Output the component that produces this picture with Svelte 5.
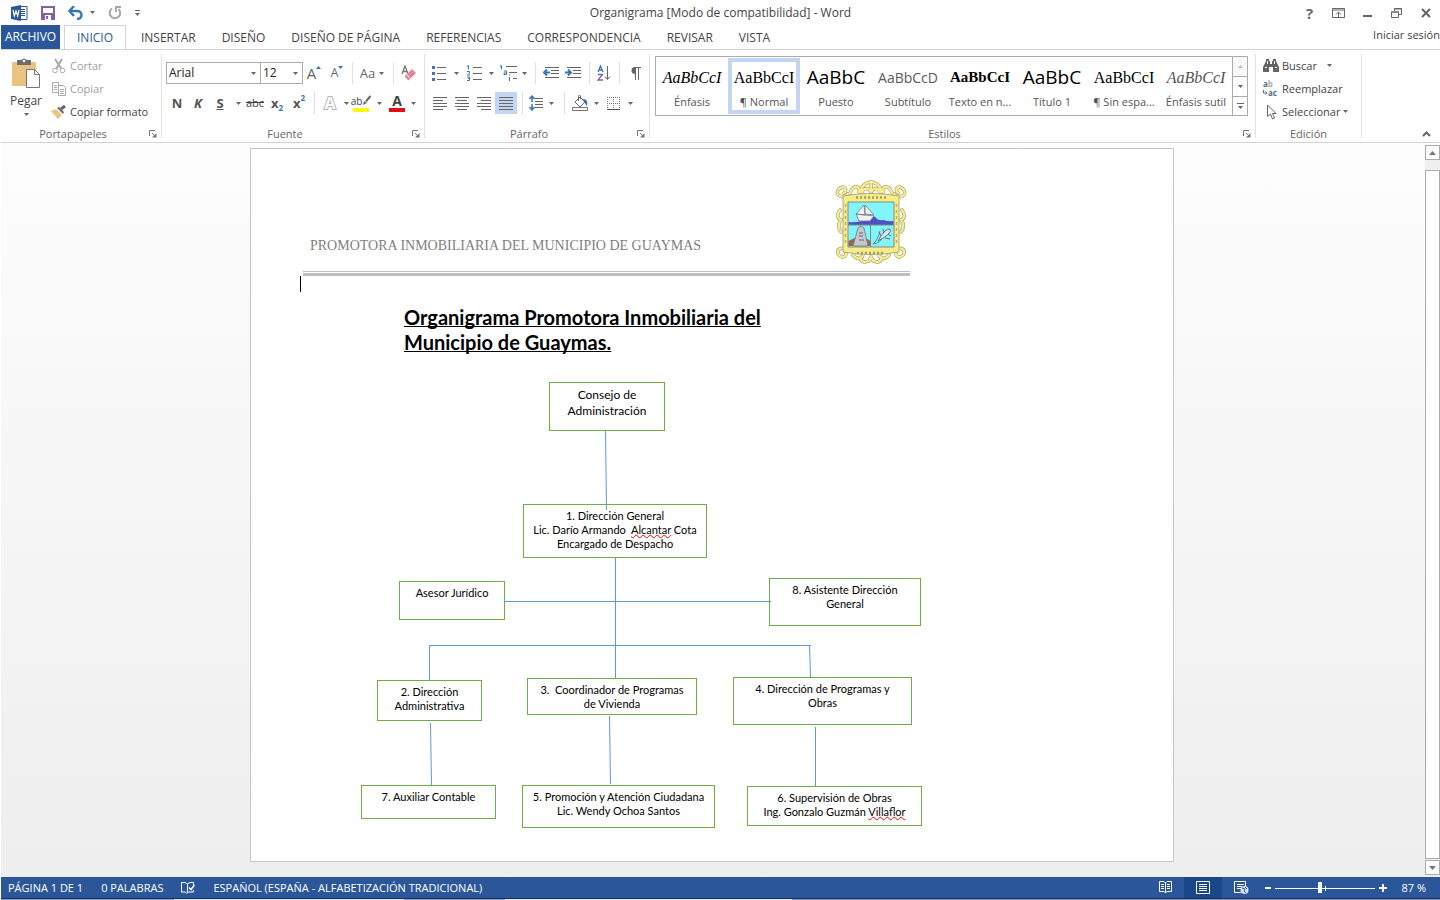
<script lang="ts">
	type Node = { x: number; y: number; w: number; h: number; lines: string[]; misspelled?: string; large?: boolean };

	const tabs = ['INICIO', 'INSERTAR', 'DISEÑO', 'DISEÑO DE PÁGINA', 'REFERENCIAS', 'CORRESPONDENCIA', 'REVISAR', 'VISTA'];
	let activeTab = $state('INICIO');

	const styles = [
		{ sample: 'AaBbCcI', name: 'Énfasis', kind: 'italic' },
		{ sample: 'AaBbCcI', name: '¶ Normal', kind: 'serif' },
		{ sample: 'AaBbC', name: 'Puesto', kind: 'big' },
		{ sample: 'AaBbCcD', name: 'Subtítulo', kind: 'light' },
		{ sample: 'AaBbCcI', name: 'Texto en n...', kind: 'bold' },
		{ sample: 'AaBbC', name: 'Título 1', kind: 'big' },
		{ sample: 'AaBbCcI', name: '¶ Sin espa...', kind: 'serif' },
		{ sample: 'AaBbCcI', name: 'Énfasis sutil', kind: 'subtle' }
	];
	let activeStyle = $state('¶ Normal');

	let zoom = $state(87);

	// positions on the drawing canvas of the page
	const nodes: Node[] = [
		{ x: 298, y: 10, w: 116, h: 49, lines: ['Consejo de', 'Administración'], large: true },
		{ x: 272, y: 132, w: 184, h: 54, lines: ['1. Dirección General', 'Lic. Darío Armando  Alcantar Cota', 'Encargado de Despacho'], misspelled: 'Alcantar' },
		{ x: 148, y: 209, w: 106, h: 39, lines: ['Asesor Jurídico'] },
		{ x: 518, y: 206, w: 152, h: 48, lines: ['8. Asistente Dirección', 'General'] },
		{ x: 126, y: 308, w: 105, h: 41, lines: ['2. Dirección', 'Administrativa'] },
		{ x: 276, y: 306, w: 170, h: 37, lines: ['3.  Coordinador de Programas', 'de Vivienda'] },
		{ x: 482, y: 305, w: 179, h: 48, lines: ['4. Dirección de Programas y', 'Obras'] },
		{ x: 110, y: 413, w: 135, h: 34, lines: ['7. Auxiliar Contable'] },
		{ x: 271, y: 413, w: 193, h: 43, lines: ['5. Promoción y Atención Ciudadana', 'Lic. Wendy Ochoa Santos'] },
		{ x: 496, y: 414, w: 175, h: 40, lines: ['6. Supervisión de Obras', 'Ing. Gonzalo Guzmán Villaflor'], misspelled: 'Villaflor' }
	];

	function split(line: string, word?: string) {
		if (!word || !line.includes(word)) return [line, '', ''];
		const at = line.indexOf(word);
		return [line.slice(0, at), word, line.slice(at + word.length)];
	}
</script>

{#snippet arrow()}
	<svg class="arrow" width="5" height="3" viewBox="0 0 5 3" aria-hidden="true"><path d="M0 0h5L2.5 3z" fill="#666" /></svg>
{/snippet}

{#snippet menu(label: string)}
	<button class="tool" aria-label={label}>{@render arrow()}</button>
{/snippet}

{#snippet launcher(label: string)}
	<button class="launcher" aria-label={label}>
		<svg width="8" height="8" viewBox="0 0 8 8"><path d="M.5 6V.5H6M3 3l3 3" fill="none" stroke="#777" /><path d="M7.5 3v4.500H3z" fill="#777" /></svg>
	</button>
{/snippet}

{#snippet lines(kind: string)}
	<svg width="14" height="13" viewBox="0 0 14 13" stroke="#666">
		<path d="M0 .5h14M0 6.500h14" />
		{#if kind === 'left'}<path d="M0 3.500h10M0 9.500h14M0 12.500h10" />{/if}
		{#if kind === 'center'}<path d="M2 3.500h10M0 9.500h14M2 12.500h10" />{/if}
		{#if kind === 'right'}<path d="M4 3.500h10M0 9.500h14M4 12.500h10" />{/if}
		{#if kind === 'full'}<path d="M0 3.500h14M0 9.500h14M0 12.500h14" />{/if}
	</svg>
{/snippet}

<div class="word">
	<header class="titlebar">
		<div class="quick">
			<svg class="logo" width="17" height="16" viewBox="0 0 17 16">
				<path d="M9 1.500h7v13H9" fill="#fff" stroke="#2b579a" />
				<path d="M10 4.500h4M10 6.500h4M10 8.500h4M10 10.500h4" stroke="#2b579a" />
				<path d="M0 2l10-2v16L0 14z" fill="#2b579a" />
				<path d="M2 5l1.300 6L5 6l1.700 5L8 5" fill="none" stroke="#fff" stroke-width="1.200" />
			</svg>
			<button aria-label="Guardar">
				<svg width="14" height="14" viewBox="0 0 14 14"><path d="M1 1h12v12H1z" fill="#fff" stroke="#8560a8" stroke-width="2" /><path d="M1 7h12v6H1z" fill="#8560a8" /><path d="M4 9h6v5H4z" fill="#fff" /><path d="M5 10h2v3H5z" fill="#8560a8" /></svg>
			</button>
			<button aria-label="Deshacer">
				<svg width="16" height="14" viewBox="0 0 16 14"><path d="M2 5h7c3 0 4.500 1.500 4.500 4S12 13 9 13" fill="none" stroke="#3a76b5" stroke-width="2.400" /><path d="M6 0L1.500 5 6 10" fill="none" stroke="#3a76b5" stroke-width="2.400" /></svg>
				{@render arrow()}
			</button>
			<button aria-label="Repetir">
				<svg width="14" height="14" viewBox="0 0 14 14"><path d="M4 2.500A5.300 5.300 0 1 0 10.500 3" fill="none" stroke="#a8a8a8" stroke-width="2" /><path d="M8 0v6M7.500 1H13" fill="none" stroke="#a8a8a8" stroke-width="2" /></svg>
			</button>
			<button aria-label="Personalizar barra">
				<svg width="5" height="6" viewBox="0 0 5 6"><path d="M0 .5h5" stroke="#666" /><path d="M0 3h5L2.500 6z" fill="#666" /></svg>
			</button>
		</div>
		<h1>Organigrama [Modo de compatibilidad] - Word</h1>
		<div class="window-buttons">
			<button class="help" aria-label="Ayuda">?</button>
			<button aria-label="Opciones de presentación">
				<svg width="13" height="10" viewBox="0 0 13 10" fill="none" stroke="#666"><path d="M.5.5h12v9H.5zM0 2h13M6.500 9V4.500M4 6.500L6.500 4 9 6.500" /></svg>
			</button>
			<button aria-label="Minimizar"><svg width="9" height="8" viewBox="0 0 9 8"><path d="M0 6h9v2H0z" fill="#666" /></svg></button>
			<button aria-label="Restaurar">
				<svg width="11" height="10" viewBox="0 0 11 10" fill="none" stroke="#666"><path d="M.5 4v5.500h7V4zM0 4h8M3.500 3V.5h7v6H8M3 1h8" /></svg>
			</button>
			<button aria-label="Cerrar"><svg width="10" height="10" viewBox="0 0 10 10"><path d="M1 1l8 8M9 1L1 9" stroke="#666" stroke-width="2" /></svg></button>
		</div>
	</header>

	<nav class="tabs">
		<button class="file">ARCHIVO</button>
		{#each tabs as tab}
			<button class="tab" class:active={tab === activeTab} onclick={() => (activeTab = tab)}>{tab}</button>
		{/each}
		<a class="signin" href="#sesion">Iniciar sesión</a>
	</nav>

	<div class="ribbon">
		<section class="group clipboard">
			<div class="split">
				<button class="paste">
					<svg width="29" height="31" viewBox="0 0 29 31">
						<path d="M0 4h24v24H0z" fill="#eac380" />
						<path d="M5 2h4.500a3 3 0 0 1 5 0H19v5H5z" fill="#6d6d6d" /><circle cx="12" cy="3" r="1.300" fill="#fff" />
						<path d="M14.500 11.500h8l5 5v13h-13z" fill="#fff" stroke="#777" /><path d="M22.500 11.500v5h5" fill="none" stroke="#777" />
					</svg>
					<span>Pegar</span>
					{@render arrow()}
				</button>
				<div class="stack">
					<button class="entry off">
						<svg width="16" height="16" viewBox="0 0 16 16" fill="none" stroke="#aaa"><path d="M4 1l6.500 10M11 1L5 11" stroke-width="2" /><circle cx="4" cy="12.500" r="2.300" /><circle cx="11.500" cy="12.500" r="2.300" /></svg>
						Cortar
					</button>
					<button class="entry off">
						<svg width="16" height="16" viewBox="0 0 16 16" fill="#fff" stroke="#aaa"><path d="M1.500 1.500h6v10h-6zM7.500 4.500h5l2 2v8h-7z" /><path d="M3 4.500h3M3 6.500h3M3 8.500h3M9 8.500h4M9 10.500h4M9 12.500h4" /></svg>
						Copiar
					</button>
					<button class="entry">
						<svg width="16" height="16" viewBox="0 0 16 16"><path d="M0 7l5-2 6 6-4 4z" fill="#eac380" /><path d="M6 4l2-1 5 5-1 2z" fill="#666" /><path d="M10 5l4-3" stroke="#666" stroke-width="3" /></svg>
						Copiar formato
					</button>
				</div>
			</div>
			<footer><span>Portapapeles</span>{@render launcher('Portapapeles')}</footer>
		</section>

		<section class="group font">
			<div class="row font-top">
				<div class="combo">
					<select aria-label="Fuente"><option>Arial</option><option>Calibri</option></select>{@render arrow()}
				</div>
				<div class="combo">
					<select aria-label="Tamaño"><option>12</option><option>14</option></select>{@render arrow()}
				</div>
				<button class="tool grow" aria-label="Aumentar">A<svg width="5" height="3" viewBox="0 0 5 3"><path d="M0 3h5L2.500 0z" fill="#3a76b5" /></svg></button>
				<button class="tool shrink" aria-label="Reducir">A<svg width="5" height="3" viewBox="0 0 5 3"><path d="M0 0h5L2.500 3z" fill="#3a76b5" /></svg></button>
				<i class="sep"></i>
				<button class="tool case">Aa{@render arrow()}</button>
				<i class="sep"></i>
				<button class="tool" aria-label="Borrar formato">
					<svg width="16" height="16" viewBox="0 0 16 16"><path d="M1 9L4 1l3 8M2.500 6.500h4" fill="none" stroke="#777" stroke-width="1.300" /><path d="M3.500 11.500L11 4l4 4-7.500 7.500z" fill="#e48699" /><path d="M5.500 9.500l4 4" stroke="#fff" /></svg>
				</button>
			</div>
			<div class="row font-bottom">
				<button class="tool letter">N</button>
				<button class="tool letter slant">K</button>
				<button class="tool letter under">S</button>
				{@render menu('Subrayado')}
				<button class="tool strike">abc</button>
				<button class="tool letter">x<small>2</small></button>
				<button class="tool letter raised">x<small>2</small></button>
				<i class="sep"></i>
				<button class="tool outline">A</button>
				{@render menu('Efectos de texto')}
				<button class="tool swatch yellow"><span>ab</span><svg width="9" height="11" viewBox="0 0 9 11"><path d="M8.500 1L4 6.500" stroke="#666" stroke-width="2" /><path d="M1 10l1-4 3 2z" fill="#666" /></svg></button>
				{@render menu('Color de resaltado')}
				<button class="tool swatch red"><b>A</b></button>
				{@render menu('Color de fuente')}
			</div>
			<footer><span>Fuente</span>{@render launcher('Fuente')}</footer>
		</section>

		<section class="group paragraph">
			<div class="row para-top">
				<button class="tool" aria-label="Viñetas">
					<svg width="14" height="15" viewBox="0 0 14 15"><path d="M5 1.500h9M5 7.500h9M5 13.500h9" stroke="#666" /><path d="M0 0h3v3H0zM0 6h3v3H0zM0 12h3v3H0z" fill="#3a76b5" /></svg>
				</button>
				{@render menu('Viñetas')}
				<button class="tool" aria-label="Numeración">
					<svg width="15" height="16" viewBox="0 0 15 16"><path d="M6 2.500h9M6 8.500h9M6 14.500h9" stroke="#666" /><path d="M0 1.500L1.500.5v4M0 6.500h2.500v1.500L.5 10H3M0 12h2.500v3.500H0M1 13.500h1.500" fill="none" stroke="#3a76b5" /></svg>
				</button>
				{@render menu('Numeración')}
				<button class="tool" aria-label="Lista multinivel">
					<svg width="17" height="16" viewBox="0 0 17 16"><path d="M6 1.500h11M9 7.500h8M13 13.500h4" stroke="#666" /><path d="M0 1.500L1.500.5v4M4 6h2.500v3.500H4V8h2M9.500 9.500v1M9.500 12v4" fill="none" stroke="#3a76b5" /></svg>
				</button>
				{@render menu('Lista multinivel')}
				<i class="sep"></i>
				<button class="tool" aria-label="Disminuir sangría">
					<svg width="16" height="12" viewBox="0 0 16 12"><path d="M2 .5h14M8 3.500h8M8 6.500h8M2 10.500h14" stroke="#666" /><path d="M1 5.500h6M4 2.500l-3 3 3 3" fill="none" stroke="#3a76b5" stroke-width="2" /></svg>
				</button>
				<button class="tool" aria-label="Aumentar sangría">
					<svg width="16" height="12" viewBox="0 0 16 12"><path d="M2 .5h14M8 3.500h8M8 6.500h8M2 10.500h14" stroke="#666" /><path d="M0 5.500h6M3 2.500l3 3-3 3" fill="none" stroke="#3a76b5" stroke-width="2" /></svg>
				</button>
				<i class="sep"></i>
				<button class="tool" aria-label="Ordenar">
					<svg width="14" height="16" viewBox="0 0 14 16" fill="none"><path d="M1 7l2.500-6L6 7M2 5h3" stroke="#3a76b5" stroke-width="1.300" /><path d="M1 9.500h4.500L1 15h5" stroke="#8560a8" stroke-width="1.300" /><path d="M10.500 1v13M8 11.500l2.500 3 2.500-3" stroke="#666" /></svg>
				</button>
				<i class="sep"></i>
				<button class="tool" aria-label="Mostrar todo">
					<svg width="11" height="13" viewBox="0 0 11 13"><path d="M5 7a3.400 3.400 0 0 1 0-7z" fill="#666" /><path d="M4 .5h7M5.500 0v13M8.500 0v13" stroke="#666" /></svg>
				</button>
			</div>
			<div class="row para-bottom">
				<button class="tool" aria-label="Izquierda">{@render lines('left')}</button>
				<button class="tool" aria-label="Centrar">{@render lines('center')}</button>
				<button class="tool" aria-label="Derecha">{@render lines('right')}</button>
				<button class="tool pressed" aria-label="Justificar">{@render lines('full')}</button>
				<i class="sep"></i>
				<button class="tool" aria-label="Interlineado">
					<svg width="14" height="16" viewBox="0 0 14 16" fill="none"><path d="M6 3.500h8M6 6.500h8M6 9.500h8M6 12.500h8" stroke="#666" /><path d="M3 1v6M.5 4L3 1l2.500 3M3 9v6M.5 12L3 15l2.500-3" stroke="#3a76b5" stroke-width="1.500" /></svg>
				</button>
				{@render menu('Interlineado')}
				<i class="sep"></i>
				<button class="tool" aria-label="Sombreado">
					<svg width="17" height="16" viewBox="0 0 17 16"><path d="M3 7l5-5 5 5-5 5z" fill="#fff" stroke="#666" /><path d="M6.500 6V1.500A1 1 0 0 1 8.500 1v3" fill="none" stroke="#666" /><path d="M11 4c4 0 5 3 4 7-2-1-1-3-3-4z" fill="#3a76b5" /><path d="M.5 12.500h15v3H.5z" fill="#fff" stroke="#777" /></svg>
				</button>
				{@render menu('Sombreado')}
				<button class="tool" aria-label="Bordes">
					<svg width="13" height="13" viewBox="0 0 13 13"><path d="M0 .5h13M0 6.500h13M.5 0v13M6.500 0v13M12.500 0v13" stroke="#777" stroke-dasharray="1 1" /><path d="M0 12.500h13" stroke="#555" /></svg>
				</button>
				{@render menu('Bordes')}
			</div>
			<footer><span>Párrafo</span>{@render launcher('Párrafo')}</footer>
		</section>

		<section class="group styles">
			<div class="gallery">
				{#each styles as style}
					<button class="style" class:chosen={style.name === activeStyle} onclick={() => (activeStyle = style.name)}>
						<span class="sample {style.kind}">{style.sample}</span>
						<span class="name">{style.name}</span>
					</button>
				{/each}
				<div class="gallery-nav">
					<button class="dim" aria-label="Anterior"><svg width="5" height="3" viewBox="0 0 5 3"><path d="M0 3h5L2.500 0z" fill="#bbb" /></svg></button>
					<button aria-label="Siguiente">{@render arrow()}</button>
					<button aria-label="Más"><svg width="7" height="6" viewBox="0 0 7 6"><path d="M0 .5h7" stroke="#666" /><path d="M1 3h5L3.500 6z" fill="#666" /></svg></button>
				</div>
			</div>
			<footer><span>Estilos</span>{@render launcher('Estilos')}</footer>
		</section>

		<section class="group editing">
			<div class="stack">
				<button class="entry">
					<svg width="16" height="14" viewBox="0 0 16 14" fill="#666"><path d="M3 0h3v2h1v3h2V2h1V0h3v2l3 6v5h-6V8H6v5H0V8l3-6z" /><path d="M2 8.500h2M12 8.500h2M4.500 2v3M11.500 2v3" stroke="#fff" /></svg>
					Buscar <em class="wide">{@render arrow()}</em>
				</button>
				<button class="entry">
					<svg class="replace" width="16" height="18" viewBox="0 0 16 18"><text x="0" y="7">a<tspan fill="#aaa">b</tspan></text><text x="5" y="16">a<tspan fill="#3a76b5">c</tspan></text><path d="M.5 10v3H4M2.500 11.500L4 13l-1.500 1.500" fill="none" stroke="#3a76b5" /></svg>
					Reemplazar
				</button>
				<button class="entry">
					<svg width="16" height="16" viewBox="0 0 16 16"><path d="M4.500 1v11.500l3-2.500 2 5 2-1-2-4.500h3.500z" fill="#fff" stroke="#666" /></svg>
					Seleccionar <em>{@render arrow()}</em>
				</button>
			</div>
			<footer><span>Edición</span></footer>
		</section>
		<div class="tail">
			<button aria-label="Contraer la cinta"><svg width="9" height="6" viewBox="0 0 9 6"><path d="M1 5l3.500-3.500L8 5" fill="none" stroke="#666" stroke-width="2" /></svg></button>
		</div>
	</div>

	<main class="workspace">
		<div class="desk">
			<article class="page">
				<div class="letterhead">
					<p>PROMOTORA INMOBILIARIA DEL MUNICIPIO DE GUAYMAS</p>
					<svg width="72" height="85" viewBox="0 0 72 85">
						<g fill="none" stroke="#aaa67e" stroke-width="3.600" stroke-linecap="round">
							<path d="M13 14C6 20-1 14 4 9s9 1 5 4M59 14c7 6 14 0 9-5s-9 1-5 4M13 70c-7-4-13 0-9 5s9 0 6-4M59 70c7-4 13 0 9 5s-9 0-6-4" />
							<path d="M15 13c4-10 11-6 9-1M57 13c-4-10-11-6-9-1M26 12c0-8 8-10 10-10s10 2 10 10M36 3v9M27 12c3-6 7-3 9 0 2-3 6-6 9 0M26 77c-2 6 8 7 10 0 2 7 12 6 10 0M18 75c5 6 10 3 10-1M54 75c-5 6-10 3-10-1M5 30c-4 5-2 9 1 10-3 3-3 8 0 12M67 30c4 5 2 9-1 10 3 3 3 8 0 12" />
						</g>
						<g fill="none" stroke="#f8ef8c" stroke-width="2.200" stroke-linecap="round">
							<path d="M13 14C6 20-1 14 4 9s9 1 5 4M59 14c7 6 14 0 9-5s-9 1-5 4M13 70c-7-4-13 0-9 5s9 0 6-4M59 70c7-4 13 0 9 5s-9 0-6-4" />
							<path d="M15 13c4-10 11-6 9-1M57 13c-4-10-11-6-9-1M26 12c0-8 8-10 10-10s10 2 10 10M36 3v9M27 12c3-6 7-3 9 0 2-3 6-6 9 0M26 77c-2 6 8 7 10 0 2 7 12 6 10 0M18 75c5 6 10 3 10-1M54 75c-5 6-10 3-10-1M5 30c-4 5-2 9 1 10-3 3-3 8 0 12M67 30c4 5 2 9-1 10 3 3 3 8 0 12" />
						</g>
						<path d="M8 16q28-5 56 0v56q-28 5-56 0z" fill="#f7ed88" stroke="#b0ab78" />
						<path d="M21 17.500h31M22 73h28" stroke="#a39d68" stroke-width="2.500" stroke-dasharray="2 2" />
						<path d="M10.500 24v42M61.500 24v42" stroke="#b8b272" stroke-width="1.500" stroke-dasharray="3 3" />
						<path d="M13 22h46v45H13z" fill="#82f4fb" stroke="#8b8b78" />
						<path d="M13.500 42q6 1 13-1 8-6 14-4 2 4 8 3 5 2 10 1v4h-45z" fill="#514fc4" />
						<path d="M21 34l18 2-4 5H24zM29 25l-8 9 9 1zM30 25l9 10-9-1z" fill="#f0f1f4" stroke="#778" stroke-width=".8" />
						<path d="M13 45h46M35.500 45v22" stroke="#7b8b86" />
						<path d="M13.500 66V61l6-3h11l5 3v5z" fill="#95694d" />
						<path d="M18 66l5-18 3-2 3 2 4 18z" fill="#c5c7cf" stroke="#777" stroke-width=".8" />
						<path d="M24 53h4M24 56h4M24 60h5" stroke="#667" />
						<path d="M38 64q5-4 7-13M38 64q7 0 11-9" fill="none" stroke="#5b8a9e" />
						<path d="M43 61q7-13 12-12 3 4-12 12zM46 56l-2-4M49 53l-1-4M50 58l5 1M53 54l3 2" fill="#dde8ed" stroke="#667" stroke-width=".9" />
					</svg>
				</div>
				<div class="rule"></div>
				<div class="caret"></div>
				<h2>Organigrama Promotora Inmobiliaria del<br />Municipio de Guaymas.</h2>
				<div class="chart">
					{#each nodes as node}
						<div class="node" class:large={node.large} style="left:{node.x}px;top:{node.y}px;width:{node.w}px;height:{node.h}px">
							{#each node.lines as line}
								{@const [before, word, after] = split(line, node.misspelled)}
								<p>{before}{#if word}<span class="typo">{word}</span>{/if}{after}</p>
							{/each}
						</div>
					{/each}
					<svg class="links" width="922" height="489" viewBox="0 0 922 489">
						<path d="M354.500 59l1 79M364.500 186v120M254 229.500h266M178.500 308V273.500H560M558.500 273l1 32M179.500 351l1 62M358.500 344l1 68M564.500 355v59" />
					</svg>
				</div>
			</article>
		</div>
		<div class="scrollbar">
			<button aria-label="Subir"><svg width="7" height="4" viewBox="0 0 7 4"><path d="M0 4h7L3.500 0z" fill="#777" /></svg></button>
			<div class="track"><div class="thumb"></div></div>
			<button aria-label="Bajar"><svg width="7" height="4" viewBox="0 0 7 4"><path d="M0 0h7L3.500 4z" fill="#777" /></svg></button>
		</div>
	</main>

	<footer class="status">
		<span>PÁGINA 1 DE 1</span>
		<span>0 PALABRAS</span>
		<button aria-label="Revisión">
			<svg width="14" height="13" viewBox="0 0 14 13" fill="none" stroke="#fff"><path d="M5.500 12.500L4.500 11H.5V1.500H4L6.500 3v8M6.500 3L9 1.500h3.500V4M6 12l2-1h4.500V9" /><path d="M8 6.500l2 2 3.500-4.500" stroke-width="1.500" /></svg>
		</button>
		<span>ESPAÑOL (ESPAÑA - ALFABETIZACIÓN TRADICIONAL)</span>
		<div class="views">
			<button aria-label="Modo de lectura">
				<svg width="13" height="13" viewBox="0 0 13 13" fill="none" stroke="#fff"><path d="M6.500 2L5 .5H.5v10H5L6.500 12 8 10.500h4.500V.5H8zM6.500 2v10M2 3.500h3M2 5.500h3M2 7.500h3M8 3.500h3M8 5.500h3M8 7.500h3" /></svg>
			</button>
			<button class="current" aria-label="Diseño de impresión">
				<svg width="14" height="13" viewBox="0 0 14 13" fill="none" stroke="#fff"><path d="M.5.5h13v12H.5zM3 3.500h8M3 5.500h8M3 7.500h8M3 9.500h8" /></svg>
			</button>
			<button aria-label="Diseño web">
				<svg width="15" height="13" viewBox="0 0 15 13"><path d="M7 11.500H.5V.5h11V5M3 3.500h7M3 5.500h5M3 7.500h4" fill="none" stroke="#fff" /><circle cx="10.500" cy="9" r="4" fill="#d5e0f0" /><path d="M8 7l3 1-1 2 2 2M11 6l2 2" stroke="#2b579a" fill="none" /></svg>
			</button>
		</div>
		<div class="zoom">
			<button aria-label="Alejar"><svg width="6" height="2" viewBox="0 0 6 2"><path d="M0 0h6v2H0z" fill="#fff" /></svg></button>
			<input type="range" min="10" max="184" bind:value={zoom} aria-label="Zoom" />
			<button aria-label="Acercar"><svg width="8" height="8" viewBox="0 0 8 8"><path d="M0 3h8v2H0zM3 0h2v8H3z" fill="#fff" /></svg></button>
			<output>{zoom} %</output>
		</div>
	</footer>
	<div class="taskbar"></div>
</div>

<style>
	:global(body) {
		margin: 0;
		background: #fff;
	}
	.word {
		display: flex;
		flex-direction: column;
		height: 100vh;
		padding-left: 1px;
		box-sizing: border-box;
		overflow: hidden;
		font: 12px/16px 'Open Sans', 'Noto Sans', sans-serif;
		color: #444;
	}
	button {
		display: flex;
		align-items: center;
		justify-content: center;
		padding: 0;
		border: 0;
		background: none;
		font: inherit;
		color: inherit;
		white-space: nowrap;
	}
	svg {
		display: block;
		flex: none;
	}
	p, h1, h2 {
		margin: 0;
	}

	.titlebar {
		display: grid;
		grid-template-columns: 1fr auto 1fr;
		align-items: center;
		height: 25px;
		flex: none;
	}
	.titlebar h1 {
		font-size: 12px;
		font-weight: 400;
	}
	.quick {
		display: flex;
		align-items: center;
		gap: 13px;
		padding-left: 10px;
		height: 22px;
	}
	.quick button {
		gap: 6px;
	}
	.window-buttons {
		display: flex;
		justify-content: flex-end;
		height: 22px;
	}
	.window-buttons button {
		width: 29px;
	}
	.window-buttons .help {
		font-size: 15px;
		font-weight: 700;
		color: #666;
	}

	.tabs {
		display: flex;
		height: 25px;
		flex: none;
		border-bottom: 1px solid #d4d4d4;
		box-sizing: border-box;
		overflow: hidden;
	}
	.file {
		width: 59px;
		margin-right: 4px;
		background: #2b579a;
		color: #fff;
	}
	.tab {
		padding: 2px 13px 0;
	}
	.tab.active {
		margin-right: 2px;
		padding: 1px 12px 0;
		border: 1px solid #d4d4d4;
		border-bottom: 0;
		color: #2b579a;
	}
	.signin {
		margin-left: auto;
		font-size: 11px;
		line-height: 20px;
		color: inherit;
		text-decoration: none;
		white-space: nowrap;
	}

	.ribbon {
		display: flex;
		height: 92px;
		flex: none;
		border-bottom: 1px solid #d4d4d4;
	}
	.group {
		display: flex;
		flex-direction: column;
		margin: 4px 0;
		padding-top: 8px;
		border-right: 1px solid #e1e1e1;
		box-sizing: border-box;
	}
	.group footer {
		display: flex;
		align-items: center;
		height: 8px;
		margin-top: auto;
		font-size: 11px;
		color: #666;
	}
	.group footer span {
		flex: 1;
		text-align: center;
	}
	.launcher {
		width: 16px;
	}
	.clipboard {
		width: 161px;
		padding-top: 0;
	}
	.font {
		width: 263px;
	}
	.paragraph {
		width: 225px;
	}
	.styles {
		flex: 1;
		padding-top: 2px;
	}
	.editing {
		width: 106px;
		padding-top: 0;
	}
	.tail {
		display: flex;
		align-items: flex-end;
		justify-content: flex-end;
		width: 78px;
		padding: 0 9px 5px 0;
		box-sizing: border-box;
	}

	.split {
		display: flex;
	}
	.paste {
		flex-direction: column;
		justify-content: flex-start;
		width: 50px;
		padding-top: 4px;
		gap: 4px;
	}
	.stack {
		display: flex;
		flex-direction: column;
	}
	.editing .stack {
		padding-left: 7px;
	}
	.entry {
		justify-content: flex-start;
		gap: 3px;
		height: 23px;
		font-size: 11px;
	}
	.entry.off {
		color: #a0a0a0;
	}
	.entry em.wide {
		margin-left: 7px;
	}
	.replace {
		font: 700 8px 'Open Sans', sans-serif;
		fill: #666;
		overflow: visible;
	}

	.row {
		display: grid;
		height: 22px;
		margin-bottom: 8px;
	}
	.font-top {
		grid-template-columns: 94px 42px 24px 22px 8px 32px 10px 22px;
		padding-left: 4px;
	}
	.font-bottom {
		grid-template-columns: 22px 20px 24px 12px 22px 22px 22px 8px 24px 8px 22px 14px 22px 10px;
		padding-left: 4px;
	}
	.para-top {
		grid-template-columns: 20px 14px 22px 12px 22px 10px 12px 20px 24px 8px 22px 8px 24px;
		padding-left: 4px;
	}
	.para-bottom {
		grid-template-columns: 22px 22px 22px 22px 10px 18px 12px 14px 18px 14px 20px 14px;
		padding-left: 4px;
	}
	.sep {
		justify-self: center;
		width: 1px;
		background: #e1e1e1;
	}
	.combo {
		display: grid;
		align-items: center;
		margin-right: -1px;
		border: 1px solid #ababab;
	}
	.combo select {
		grid-area: 1 / 1;
		width: 100%;
		height: 20px;
		padding: 0 2px;
		border: 0;
		appearance: none;
		background: #fff;
		font: inherit;
		color: #222;
	}
	.combo .arrow {
		grid-area: 1 / 1;
		justify-self: end;
		margin-right: 4px;
		pointer-events: none;
	}
	.tool.pressed {
		background: #c2d5f2;
	}
	.grow, .shrink {
		align-items: flex-start;
		line-height: 22px;
		color: #666;
	}
	.grow {
		font-size: 15px;
	}
	.shrink {
		font-size: 12px;
	}
	.grow svg, .shrink svg {
		margin-top: 4px;
	}
	.case {
		gap: 4px;
		font-size: 13px;
		color: #666;
	}
	.letter {
		font-size: 13px;
		font-weight: 700;
		color: #555;
	}
	.letter small {
		align-self: flex-end;
		font-size: 8px;
		line-height: 12px;
		color: #3a76b5;
	}
	.letter.raised small {
		align-self: flex-start;
	}
	.slant {
		font-style: italic;
	}
	.under {
		text-decoration: underline;
	}
	.strike {
		font-size: 11px;
		text-decoration: line-through;
	}
	.outline {
		font-size: 16px;
		font-weight: 700;
		color: #fff;
		-webkit-text-stroke: 2px #b5b5b5;
		paint-order: stroke fill;
	}
	.swatch {
		align-items: flex-start;
		align-self: center;
		justify-self: center;
		width: 16px;
		height: 17px;
		font-size: 10px;
		line-height: 12px;
		border-bottom: 4px solid #fcf712;
		box-sizing: border-box;
	}
	.swatch.red {
		font-size: 14px;
		border-color: #e01010;
	}

	.gallery {
		display: flex;
		height: 60px;
		margin: 0 7px 0 5px;
		border: 1px solid #ababab;
		box-sizing: border-box;
	}
	.style {
		flex: 1;
		flex-direction: column;
		min-width: 0;
		margin: 1px 0;
		border: 4px solid transparent;
	}
	.style.chosen {
		border-color: #c2d5f2;
	}
	.sample {
		font: 16px/31px 'Liberation Serif', serif;
		color: #000;
	}
	.sample.italic {
		font-style: italic;
	}
	.sample.big {
		font: 19px/31px 'Open Sans', sans-serif;
	}
	.sample.light {
		font: 14px/31px 'Open Sans', sans-serif;
		color: #5a5a5a;
	}
	.sample.bold {
		font-size: 15px;
		font-weight: 700;
	}
	.sample.subtle {
		font-style: italic;
		color: #555;
	}
	.name {
		font-size: 11px;
		line-height: 17px;
		color: #555;
	}
	.gallery-nav {
		display: grid;
		grid-template-rows: 1fr 1fr 1fr;
		width: 14px;
		border-left: 1px solid #ababab;
	}
	.gallery-nav button + button {
		border-top: 1px solid #ababab;
	}
	.gallery-nav .dim {
		background: #f8f8f8;
	}

	.workspace {
		display: flex;
		flex: 1;
		min-height: 0;
		background: linear-gradient(#fdfdfd, #eee);
	}
	.desk {
		flex: 1;
		padding: 5px 2px 0 0;
		overflow: hidden;
	}
	.page {
		width: 922px;
		margin: 0 auto;
		border: 1px solid #c6c6c6;
		background: #fff;
	}
	.letterhead {
		display: flex;
		align-items: flex-end;
		justify-content: space-between;
		width: 597px;
		height: 116px;
		padding: 0 3px 6px 59px;
	}
	.letterhead p {
		padding-bottom: 10px;
		font: 14px/18px 'Liberation Serif', serif;
		color: #808080;
		white-space: nowrap;
	}
	.rule {
		width: 607px;
		height: 1px;
		margin-left: 52px;
		border-top: 1px solid #bfbfbf;
		border-bottom: 3px solid #bfbfbf;
	}
	.caret {
		width: 1px;
		height: 16px;
		margin-left: 49px;
		background: #000;
	}
	h2 {
		margin: 13px 0 17px 153px;
		font: 700 20px/25px Lato, sans-serif;
		color: #000;
		text-decoration: underline;
		text-decoration-skip-ink: none;
		text-decoration-thickness: 1px;
	}
	.chart {
		position: relative;
		height: 489px;
	}
	.links {
		position: absolute;
		inset: 0;
		fill: none;
		stroke: #5b9bd5;
	}
	.node {
		position: absolute;
		padding-top: 4px;
		border: 1px solid #70ad47;
		box-sizing: border-box;
		background: #fff;
		font: 11px/14px Lato, sans-serif;
		color: #000;
		text-align: center;
		white-space: pre;
	}
	.node.large {
		font-size: 12px;
		line-height: 16px;
	}
	.typo {
		text-decoration: underline wavy #f00 1px;
		text-decoration-skip-ink: none;
		text-underline-offset: 0;
	}

	.scrollbar {
		display: flex;
		flex-direction: column;
		width: 15px;
		padding: 2px 0;
	}
	.scrollbar button {
		height: 15px;
		border: 1px solid #ababab;
		background: #fff;
	}
	.track {
		display: flex;
		flex: 1;
		padding: 10px 0 1px;
		background: #f0f0f0;
	}
	.thumb {
		flex: 1;
		border: 1px solid #ababab;
		background: #fff;
	}

	.status {
		display: flex;
		align-items: center;
		height: 21px;
		flex: none;
		padding-left: 7px;
		background: #2b579a;
		font-size: 11px;
		color: #fff;
		white-space: nowrap;
	}
	.status > span, .status > button {
		margin-right: 18px;
	}
	.views {
		display: flex;
		margin-left: auto;
	}
	.views button {
		width: 38px;
		height: 21px;
	}
	.views .current {
		background: #19478a;
	}
	.zoom {
		display: flex;
		align-items: center;
		gap: 4px;
		padding: 0 14px 0 5px;
	}
	.zoom output {
		margin-left: 10px;
	}
	.zoom input {
		width: 100px;
		height: 12px;
		margin: 0;
		appearance: none;
		background:
			linear-gradient(#fff, #fff) 50px 4px / 1px 5px no-repeat,
			linear-gradient(#fff, #fff) 0 6px / 100% 1px no-repeat;
	}
	.zoom input::-webkit-slider-thumb {
		appearance: none;
		width: 4px;
		height: 11px;
		background: #fff;
	}
	.taskbar {
		height: 1px;
		flex: none;
		border-top: 1px solid #17305a;
		background: linear-gradient(90deg, #8aa2c4 12%, #dfe6ee 12% 28%, #8ba0bc 28% 35%, #e6ebf2 35% 55%, #8298b8 55%);
	}
</style>
